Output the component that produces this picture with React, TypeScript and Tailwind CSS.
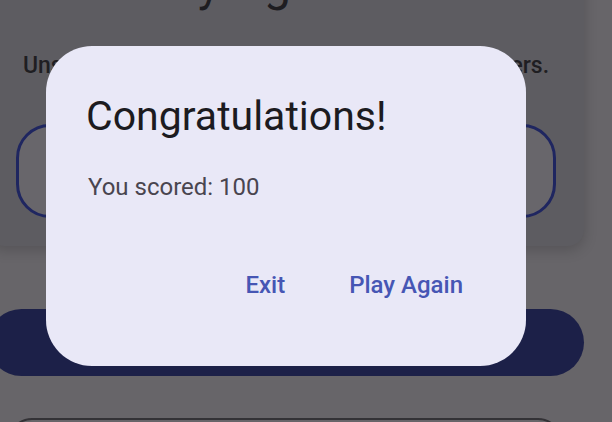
import React from 'react'

function ScoreDialog() {
  return (
    <div className="absolute left-[46px] top-[46px] w-[480px] h-[320px] rounded-[46px] bg-[#e9e8f7] pt-[44px] px-[42px]">
      <h2 className="-ml-[2px] text-[41px] leading-[52px] text-[#1c1b1f]">Congratulations!</h2>
      <p className="mt-[29px] text-[24px] leading-[32px] text-[#49454f]">You scored: 100</p>
      <div className="mt-[66px] flex justify-end gap-[22px]">
        <button className="px-[21px] text-[24px] leading-[32px] font-medium text-[#4656b4]">Exit</button>
        <button className="px-[21px] text-[24px] leading-[32px] font-medium text-[#4656b4]">Play Again</button>
      </div>
    </div>
  )
}

export default function App() {
  return (
    <div className="relative w-[612px] h-[422px] overflow-hidden bg-[#676569] font-['Roboto',sans-serif]">
      <div className="flex flex-col">
        {/* card behind the scrim */}
        <div className="-mt-[44px] -ml-[12px] w-[596px] rounded-b-[16px] bg-[#5d5c61] px-[28px] pb-[28px] shadow-[0_4px_14px_rgba(0,0,0,0.18)]">
          <h1 className="pr-[96px] text-center text-[48px] leading-[56px] text-[#1e1d21]">Today's game</h1>
          <p className="mt-[39px] whitespace-nowrap text-center text-[23px] leading-[30px] font-medium text-[#1f1e22]">
            Unscramble the words using all of the given letters.
          </p>
          <div className="mt-[43px] h-[94px] rounded-[34px] border-[3px] border-[#1f2660] bg-[#68666b]" />
        </div>

        <button className="mt-[63px] -ml-[12px] w-[596px] h-[67px] rounded-full bg-[#1c2048]" />

        <div className="mt-[42px] ml-[8px] w-[554px] h-[60px] rounded-[24px] border-[2px] border-[#333236]" />
      </div>

      <ScoreDialog />
    </div>
  )
}
